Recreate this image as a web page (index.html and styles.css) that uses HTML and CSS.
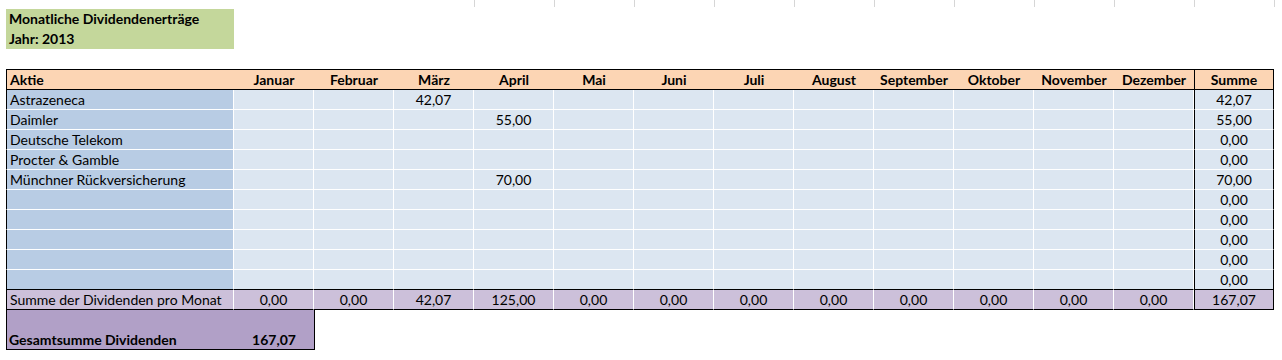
FILE: index.html
```html
<!DOCTYPE html>
<html lang="de">
<head>
<meta charset="utf-8">
<title>Monatliche Dividendenerträge</title>
<link rel="stylesheet" href="styles.css">
</head>
<body>
<div class="sheet">
  <div class="gridlines">
    <span></span><span></span><span></span><span></span><span></span><span></span><span></span><span></span><span></span><span></span><span class="last"></span>
  </div>
  <div class="title">
    <div class="line">Monatliche Dividendenerträge</div>
    <div class="line">Jahr: 2013</div>
  </div>
  <div class="spacer"></div>
  <div class="table">
    <div class="row head">
      <div class="c name">Aktie</div>
      <div class="c">Januar</div><div class="c">Februar</div><div class="c">März</div><div class="c">April</div>
      <div class="c">Mai</div><div class="c">Juni</div><div class="c">Juli</div><div class="c">August</div>
      <div class="c">September</div><div class="c">Oktober</div><div class="c">November</div><div class="c">Dezember</div>
      <div class="c sum">Summe</div>
    </div>
    <div class="row body">
      <div class="c name">Astrazeneca</div>
      <div class="c"></div><div class="c"></div><div class="c">42,07</div><div class="c"></div><div class="c"></div><div class="c"></div><div class="c"></div><div class="c"></div><div class="c"></div><div class="c"></div><div class="c"></div><div class="c"></div>
      <div class="c sum">42,07</div>
    </div>
    <div class="row body">
      <div class="c name">Daimler</div>
      <div class="c"></div><div class="c"></div><div class="c"></div><div class="c">55,00</div><div class="c"></div><div class="c"></div><div class="c"></div><div class="c"></div><div class="c"></div><div class="c"></div><div class="c"></div><div class="c"></div>
      <div class="c sum">55,00</div>
    </div>
    <div class="row body">
      <div class="c name">Deutsche Telekom</div>
      <div class="c"></div><div class="c"></div><div class="c"></div><div class="c"></div><div class="c"></div><div class="c"></div><div class="c"></div><div class="c"></div><div class="c"></div><div class="c"></div><div class="c"></div><div class="c"></div>
      <div class="c sum">0,00</div>
    </div>
    <div class="row body">
      <div class="c name">Procter &amp; Gamble</div>
      <div class="c"></div><div class="c"></div><div class="c"></div><div class="c"></div><div class="c"></div><div class="c"></div><div class="c"></div><div class="c"></div><div class="c"></div><div class="c"></div><div class="c"></div><div class="c"></div>
      <div class="c sum">0,00</div>
    </div>
    <div class="row body">
      <div class="c name">Münchner Rückversicherung</div>
      <div class="c"></div><div class="c"></div><div class="c"></div><div class="c">70,00</div><div class="c"></div><div class="c"></div><div class="c"></div><div class="c"></div><div class="c"></div><div class="c"></div><div class="c"></div><div class="c"></div>
      <div class="c sum">70,00</div>
    </div>
    <div class="row body">
      <div class="c name"></div>
      <div class="c"></div><div class="c"></div><div class="c"></div><div class="c"></div><div class="c"></div><div class="c"></div><div class="c"></div><div class="c"></div><div class="c"></div><div class="c"></div><div class="c"></div><div class="c"></div>
      <div class="c sum">0,00</div>
    </div>
    <div class="row body">
      <div class="c name"></div>
      <div class="c"></div><div class="c"></div><div class="c"></div><div class="c"></div><div class="c"></div><div class="c"></div><div class="c"></div><div class="c"></div><div class="c"></div><div class="c"></div><div class="c"></div><div class="c"></div>
      <div class="c sum">0,00</div>
    </div>
    <div class="row body">
      <div class="c name"></div>
      <div class="c"></div><div class="c"></div><div class="c"></div><div class="c"></div><div class="c"></div><div class="c"></div><div class="c"></div><div class="c"></div><div class="c"></div><div class="c"></div><div class="c"></div><div class="c"></div>
      <div class="c sum">0,00</div>
    </div>
    <div class="row body">
      <div class="c name"></div>
      <div class="c"></div><div class="c"></div><div class="c"></div><div class="c"></div><div class="c"></div><div class="c"></div><div class="c"></div><div class="c"></div><div class="c"></div><div class="c"></div><div class="c"></div><div class="c"></div>
      <div class="c sum">0,00</div>
    </div>
    <div class="row body last">
      <div class="c name"></div>
      <div class="c"></div><div class="c"></div><div class="c"></div><div class="c"></div><div class="c"></div><div class="c"></div><div class="c"></div><div class="c"></div><div class="c"></div><div class="c"></div><div class="c"></div><div class="c"></div>
      <div class="c sum">0,00</div>
    </div>
    <div class="row total">
      <div class="c name">Summe der Dividenden pro Monat</div>
      <div class="c">0,00</div><div class="c">0,00</div><div class="c">42,07</div><div class="c">125,00</div><div class="c">0,00</div><div class="c">0,00</div><div class="c">0,00</div><div class="c">0,00</div><div class="c">0,00</div><div class="c">0,00</div><div class="c">0,00</div><div class="c">0,00</div>
      <div class="c sum">167,07</div>
    </div>
    <div class="grand">
      <div class="glabel">Gesamtsumme Dividenden</div>
      <div class="gvalue">167,07</div>
    </div>
  </div>
</div>
</body>
</html>
```
FILE: styles.css
```css
html, body {
  margin: 0;
  padding: 0;
  background: #ffffff;
}
body {
  font-family: Lato, "Liberation Sans", sans-serif;
  font-size: 14px;
  color: #000000;
}
.sheet {
  padding-left: 6px;
}
.gridlines {
  display: flex;
  height: 9px;
  padding-left: 468px;
}
.gridlines span {
  width: 80px;
  height: 7px;
  border-left: 1px solid #d6d6d6;
  box-sizing: border-box;
  flex: none;
}
.gridlines span.last {
  width: 1px;
}
.title {
  width: 228px;
  height: 40px;
  background: #c4d79b;
  font-weight: bold;
  box-sizing: border-box;
  padding-left: 3px;
}
.title .line {
  height: 20px;
  line-height: 20px;
}
.spacer {
  height: 20px;
}
.table {
  width: 1268px;
}
.row {
  display: grid;
  grid-template-columns: 228px repeat(13, 80px);
  width: 1268px;
  box-sizing: border-box;
}
.c {
  box-sizing: border-box;
  line-height: 19px;
  text-align: center;
  white-space: nowrap;
  overflow: hidden;
}
.c.name {
  text-align: left;
  padding-left: 3px;
  border-left: 1px solid #000;
}
.head {
  height: 21px;
  border-top: 1px solid #000;
  border-bottom: 1px solid #000;
  background: #fcd5b4;
  font-weight: bold;
}
.head .c {
  height: 19px;
}
.head .c.sum {
  border-left: 1px solid #000;
  border-right: 1px solid #000;
}
.body {
  height: 20px;
}
.body .c {
  background: #dce6f1;
  border-right: 1px solid #ffffff;
  border-bottom: 1px solid #ffffff;
  height: 20px;
}
.body .c.name {
  background: #b8cce4;
}
.body.last .c {
  border-bottom-color: #000;
}
.body .c.sum {
  border-left: 1px solid #000;
  border-right: 1px solid #000;
}
.total {
  height: 20px;
}
.total .c {
  background: #ccc0da;
  border-right: 1px solid #ffffff;
  border-bottom: 1px solid #000;
  height: 20px;
}
.total .c.sum {
  border-left: 1px solid #000;
  border-right: 1px solid #000;
}
.grand {
  width: 309px;
  height: 40px;
  box-sizing: border-box;
  background: #b1a0c7;
  border-left: 1px solid #000;
  border-right: 1px solid #000;
  border-bottom: 1px solid #000;
  display: flex;
  align-items: flex-end;
  font-weight: bold;
  line-height: 19px;
}
.glabel {
  width: 227px;
  padding-left: 2px;
  box-sizing: border-box;
}
.gvalue {
  width: 80px;
  text-align: center;
}
```
